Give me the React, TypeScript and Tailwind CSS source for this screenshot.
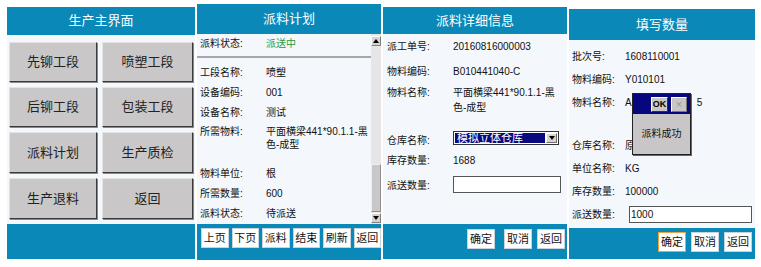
import React from "react";

const F = { fontFamily: '"Liberation Sans", "Noto Sans CJK SC", sans-serif' };

function Header({ title, h }: { title: string; h: string }) {
  return (
    <div className={`${h} bg-[#0a88b8] flex items-center justify-center text-white text-[13px]`}>
      {title}
    </div>
  );
}

function GreyBtn({ label }: { label: string }) {
  return (
    <div className="bg-[#c9c7c7] border border-t-[#e4e4e4] border-l-[#e4e4e4] border-b-[#3a3a3a] border-r-[#3a3a3a] shadow-[1px_1px_0_#8a8a8a] flex items-center justify-center text-[13px] text-[#222]">
      {label}
    </div>
  );
}

function SmallBtn({ label, cls = "" }: { label: string; cls?: string }) {
  return (
    <div
      className={`w-[28px] h-[20px] bg-white border border-[#c8d4dc] flex items-center justify-center text-[11px] text-[#111] ${cls}`}
    >
      {label}
    </div>
  );
}

function Row2({ label, value, h, cls = "" }: { label: string; value: React.ReactNode; h: string; cls?: string }) {
  return (
    <div className={`${h} flex items-center pl-[3px] text-[10px] text-[#111]`}>
      <div className="w-[66px] shrink-0">{label}</div>
      <div className={cls}>{value}</div>
    </div>
  );
}

function Panel1() {
  const labels = ["先铆工段", "喷塑工段", "后铆工段", "包装工段", "派料计划", "生产质检", "生产退料", "返回"];
  return (
    <div className="ml-[7px] mt-[7px] w-[188px] flex flex-col">
      <Header title="生产主界面" h="h-[28px]" />
      <div className="h-[189px] bg-[#f4f8fc] pt-[7px] pl-[2px] pr-[2px]">
        <div className="grid grid-cols-[88px_91px] grid-rows-[40px_40px_41px_41px] gap-x-[5px] gap-y-[5px]">
          {labels.map((l) => (
            <GreyBtn key={l} label={l} />
          ))}
        </div>
      </div>
      <div className="h-[35px] bg-[#0a88b8]" />
    </div>
  );
}

function Tri({ up }: { up: boolean }) {
  return (
    <svg width="6" height="4" viewBox="0 0 6 4">
      {up ? <polygon points="3,0 6,4 0,4" fill="#000" /> : <polygon points="0,0 6,0 3,4" fill="#000" />}
    </svg>
  );
}

function Panel2() {
  return (
    <div className="ml-[2px] mt-[4px] w-[184px] flex flex-col">
      <Header title="派料计划" h="h-[30px]" />
      <div className="h-[190px] bg-[#f4f8fc] flex">
        <div className="w-[174px] flex flex-col">
          <Row2 label="派料状态:" value="派送中" h="h-[18px]" cls="text-[#2a9a3a]" />
          <div className="mt-[4px] h-[2px] bg-[#a8a8a8]" />
          <div className="h-[4px]" />
          <Row2 label="工段名称:" value="喷塑" h="h-[20px]" />
          <Row2 label="设备编码:" value="001" h="h-[20px]" />
          <Row2 label="设备名称:" value="测试" h="h-[20px]" />
          <div className="h-[41px] flex pl-[3px] pt-[3px] text-[10px] text-[#111] leading-[13px]">
            <div className="w-[66px] shrink-0">所需物料:</div>
            <div>
              平面横梁441*90.1.1-黑
              <br />
              色-成型
            </div>
          </div>
          <Row2 label="物料单位:" value="根" h="h-[20px]" />
          <Row2 label="所需数量:" value="600" h="h-[20px]" />
          <Row2 label="派料状态:" value="待派送" h="h-[20px]" />
        </div>
        <div className="w-[10px] flex flex-col bg-[#e6e6e6]">
          <div className="mt-[2px] h-[10px] bg-[#d6d3ce] border border-t-white border-l-white border-b-[#808080] border-r-[#808080] flex items-center justify-center">
            <Tri up />
          </div>
          <div className="h-[118px]" />
          <div className="h-[48px] bg-[#c8c8c8] border border-t-[#eee] border-l-[#eee] border-b-[#909090] border-r-[#909090]" />
          <div className="mt-[1px] h-[10px] bg-[#d6d3ce] border border-t-white border-l-white border-b-[#808080] border-r-[#808080] flex items-center justify-center">
            <Tri up={false} />
          </div>
        </div>
      </div>
      <div className="h-[36px] bg-[#0a88b8] flex pt-[4px] pl-[4px] gap-[3px]">
        {["上页", "下页", "派料", "结束", "刷新", "返回"].map((l) => (
          <SmallBtn key={l} label={l} cls="w-[27px]" />
        ))}
      </div>
    </div>
  );
}

function Row3({ label, value, h, cls = "" }: { label: string; value: React.ReactNode; h: string; cls?: string }) {
  return (
    <div className={`${h} flex items-center pl-[4px] text-[10px] text-[#111]`}>
      <div className="w-[66px] shrink-0">{label}</div>
      <div className={cls}>{value}</div>
    </div>
  );
}

function Panel3() {
  return (
    <div className="ml-[2px] mt-[7px] w-[184px] flex flex-col">
      <Header title="派料详细信息" h="h-[27px]" />
      <div className="h-[190px] bg-[#f4f8fc] flex flex-col pt-[3px]">
        <Row3 label="派工单号:" value="20160816000003" h="h-[18px]" />
        <div className="h-[7px]" />
        <Row3 label="物料编码:" value="B010441040-C" h="h-[18px]" />
        <div className="h-[5px]" />
        <div className="h-[38px] flex pl-[4px] text-[10px] text-[#111] leading-[15px]">
          <div className="w-[66px] shrink-0">物料名称:</div>
          <div>
            平面横梁441*90.1.1-黑
            <br />
            色-成型
          </div>
        </div>
        <div className="h-[7px]" />
        <div className="h-[18px] flex items-end pl-[4px] text-[10px] text-[#111]">
          <div className="w-[66px] shrink-0">仓库名称:</div>
          <div className="mb-[3px] w-[106px] h-[14px] bg-white border border-[#333] flex items-stretch p-[1px]">
            <div className="flex-1 bg-[#0a0a80] text-white text-[11px] leading-[10px] pl-[2px] flex items-center">
              模拟立体仓库
            </div>
            <div className="w-[11px] ml-[1px] bg-[#d6d3ce] border border-t-white border-l-white border-b-[#707070] border-r-[#707070] flex items-center justify-center">
              <Tri up={false} />
            </div>
          </div>
        </div>
        <div className="h-[3px]" />
        <Row3 label="库存数量:" value="1688" h="h-[18px]" />
        <div className="h-[6px]" />
        <div className="h-[18px] flex items-center pl-[4px] text-[10px] text-[#111]">
          <div className="w-[66px] shrink-0 pt-[3px]">派送数量:</div>
          <div className="w-[108px] h-[17px] bg-white border border-[#555]" />
        </div>
      </div>
      <div className="h-[35px] bg-[#0a88b8] flex justify-end pt-[5px] pr-[2px]">
        <SmallBtn label="确定" cls="w-[27px]" />
        <SmallBtn label="取消" cls="w-[27px] ml-[9px]" />
        <SmallBtn label="返回" cls="w-[28px] ml-[5px]" />
      </div>
    </div>
  );
}

function Row4({ label, value, h }: { label: string; value: React.ReactNode; h: string }) {
  return (
    <div className={`${h} flex items-center pl-[3px] text-[10px] text-[#111]`}>
      <div className="w-[53px] shrink-0">{label}</div>
      <div>{value}</div>
    </div>
  );
}

function Panel4() {
  return (
    <div className="ml-[2px] mt-[9px] w-[186px] flex flex-col">
      <Header title="填写数量" h="h-[31px]" />
      <div className="h-[188px] bg-[#f4f8fc] flex flex-col pt-[5px]">
        <Row4 label="批次号:" value="1608110001" h="h-[23px]" />
        <Row4 label="物料编码:" value="Y010101" h="h-[23px]" />
        <div className="h-[43px] flex pl-[3px] pt-[5px] text-[10px] text-[#111] leading-[13px]">
          <div className="w-[53px] shrink-0">物料名称:</div>
          <div className="flex">
            <span>A</span>
            <span className="w-[65px]" />
            <span>5</span>
          </div>
        </div>
        <Row4 label="仓库名称:" value="原" h="h-[23px]" />
        <Row4 label="单位名称:" value="KG" h="h-[23px]" />
        <Row4 label="库存数量:" value="100000" h="h-[23px]" />
        <div className="h-[23px] flex items-center pl-[3px] text-[10px] text-[#111]">
          <div className="w-[57px] shrink-0">派送数量:</div>
          <div className="w-[123px] h-[17px] bg-white border border-[#555] flex items-center pl-[1px]">1000</div>
        </div>
      </div>
      <div className="h-[31px] bg-[#0a88b8] flex justify-end pt-[4px] pr-[3px]">
        <SmallBtn label="确定" cls="border-[#e8a640]" />
        <SmallBtn label="取消" cls="w-[27px] ml-[5px]" />
        <SmallBtn label="返回" cls="ml-[5px]" />
      </div>
    </div>
  );
}

function Dialog() {
  return (
    <div className="absolute left-[632px] top-[93px] w-[59px] h-[62px] border border-[#222] shadow-[1px_1px_0_#666] flex flex-col bg-[#c8c6c6]">
      <div className="h-[20px] bg-[#06067e] flex items-center pl-[18px]">
        <div className="w-[17px] h-[15px] bg-[#c8c6c6] border border-t-white border-l-white border-b-[#333] border-r-[#333] flex items-center justify-center text-[9px] font-bold text-black leading-none">
          OK
        </div>
        <div className="ml-[3px] w-[16px] h-[15px] bg-[#c8c6c6] border border-t-white border-l-white border-b-[#777] border-r-[#777] flex items-center justify-center text-[11px] text-[#999] leading-none">
          ×
        </div>
      </div>
      <div className="flex-1 flex items-center justify-center text-[10px] text-[#111] pb-[2px]">派料成功</div>
    </div>
  );
}

export default function App() {
  return (
    <div className="relative w-[761px] h-[267px] bg-white overflow-hidden flex items-start" style={F}>
      <Panel1 />
      <Panel2 />
      <Panel3 />
      <Panel4 />
      <Dialog />
    </div>
  );
}
